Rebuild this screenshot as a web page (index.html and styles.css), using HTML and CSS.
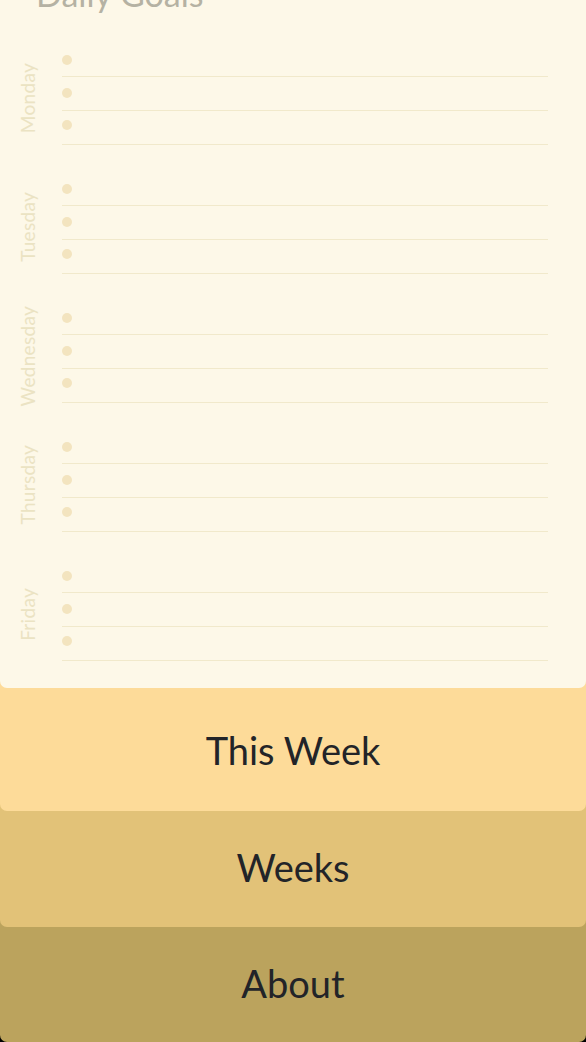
FILE: index.html
```html
<!DOCTYPE html>
<html lang="en">
<head>
<meta charset="utf-8">
<title>Daily Goals</title>
<link rel="stylesheet" href="styles.css">
</head>
<body>
<main class="app">
  <section class="card">
    <h1 class="title">Daily Goals</h1>
    <div class="group">
      <div class="day"><span>Monday</span></div>
      <ul class="rows"><li class="row"><span class="dot"></span></li><li class="row"><span class="dot"></span></li><li class="row"><span class="dot"></span></li></ul>
    </div>
    <div class="group">
      <div class="day"><span>Tuesday</span></div>
      <ul class="rows"><li class="row"><span class="dot"></span></li><li class="row"><span class="dot"></span></li><li class="row"><span class="dot"></span></li></ul>
    </div>
    <div class="group">
      <div class="day"><span>Wednesday</span></div>
      <ul class="rows"><li class="row"><span class="dot"></span></li><li class="row"><span class="dot"></span></li><li class="row"><span class="dot"></span></li></ul>
    </div>
    <div class="group">
      <div class="day"><span>Thursday</span></div>
      <ul class="rows"><li class="row"><span class="dot"></span></li><li class="row"><span class="dot"></span></li><li class="row"><span class="dot"></span></li></ul>
    </div>
    <div class="group">
      <div class="day"><span>Friday</span></div>
      <ul class="rows"><li class="row"><span class="dot"></span></li><li class="row"><span class="dot"></span></li><li class="row"><span class="dot"></span></li></ul>
    </div>
  </section>
  <nav class="nav">
    <a class="nav-item nav-this-week">This Week</a>
    <a class="nav-item nav-weeks">Weeks</a>
    <a class="nav-item nav-about">About</a>
  </nav>
</main>
</body>
</html>
```

FILE: styles.css
```css
* { box-sizing: border-box; }
html, body { margin: 0; padding: 0; background: #000; }
body { font-family: Lato, "Noto Sans", sans-serif; overflow: hidden; }
.app { display: flex; flex-direction: column; height: 1042px; }

.card {
  position: relative;
  z-index: 4;
  background: #fdf8e8;
  border-radius: 0 0 7px 7px;
  margin-top: -26px;
  padding: 0 38px 27px 0;
}
.title {
  margin: 0 0 29px 36px;
  font-size: 34px;
  line-height: 40px;
  font-weight: 400;
  color: #b5b2a3;
}
.group { display: flex; height: 102px; margin-bottom: 27px; }
.group:last-child { margin-bottom: 0; }
.day {
  width: 62px;
  height: 102px;
  display: flex;
  align-items: center;
  justify-content: flex-start;
  padding: 8px 0 0 18px;
}
.day span {
  writing-mode: vertical-rl;
  transform: rotate(180deg);
  font-size: 19px;
  letter-spacing: 0.3px;
  color: #ebe3c3;
  line-height: 1;
  white-space: nowrap;
}
.rows { flex: 1; list-style: none; margin: 0; padding: 0; }
.row {
  height: 34px;
  border-bottom: 1px solid #f1e9cb;
  display: flex;
  align-items: flex-start;
}
.dot {
  width: 10px;
  height: 10px;
  border-radius: 50%;
  background: #f3e4bf;
  margin-top: 12px;
}
.row:nth-child(2) .dot { margin-top: 10.5px; }
.row:nth-child(3) .dot { margin-top: 9px; }

.nav { display: flex; flex-direction: column; flex: 1; }
.nav-item {
  position: relative;
  display: flex;
  align-items: center;
  justify-content: center;
  margin-top: -8px;
  padding-top: 8px;
  border-radius: 0 0 7px 7px;
  font-size: 38px;
  color: #222428;
  text-decoration: none;
}
.nav-this-week { z-index: 3; background: #fddb99; height: 131px; }
.nav-weeks { z-index: 2; background: #e2c278; height: 124px; padding-bottom: 5px; }
.nav-about { z-index: 1; background: #bba35d; flex: 1; padding-bottom: 4px; }
```
